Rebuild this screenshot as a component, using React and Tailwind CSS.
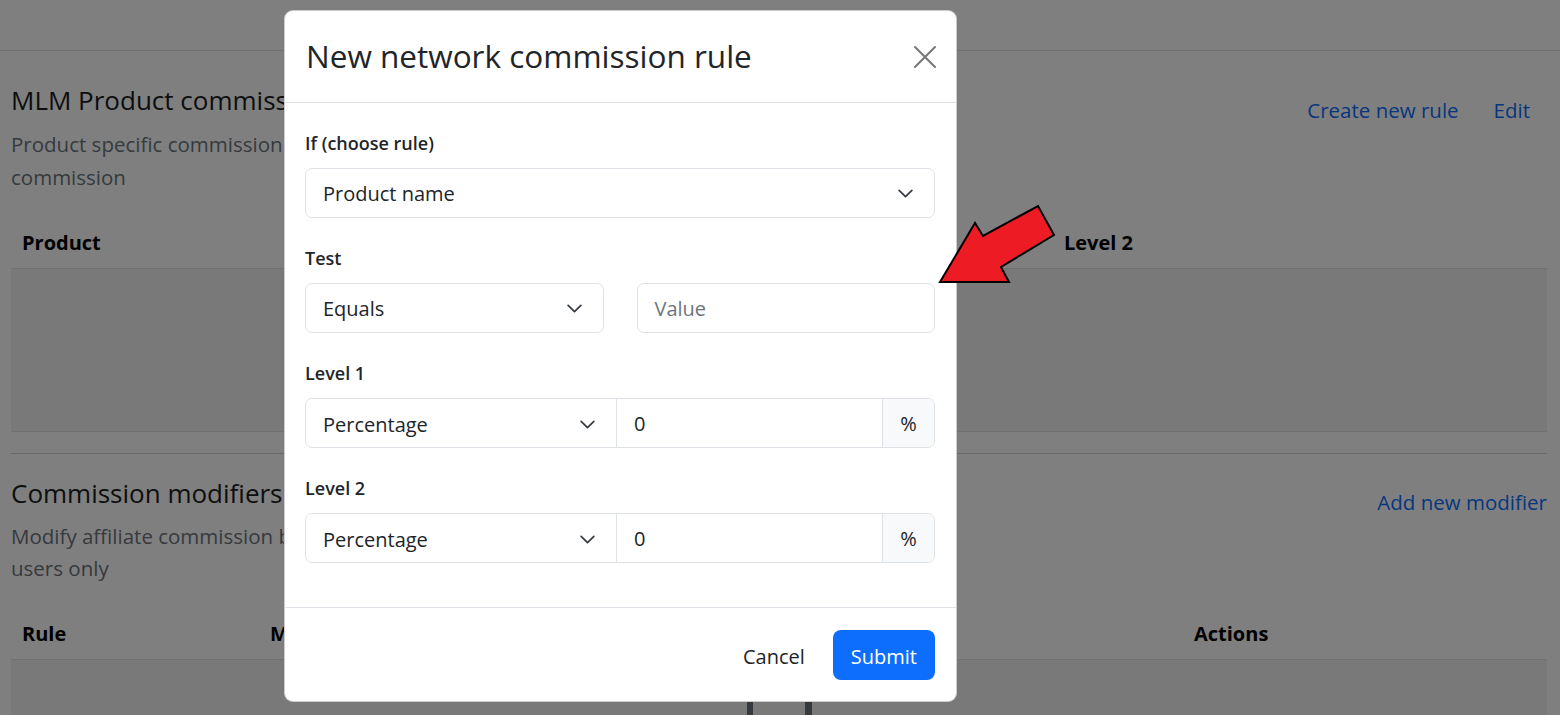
import React from "react";

function Chevron() {
  return (
    <svg width="17" height="17" viewBox="0 0 16 16" fill="none" className="shrink-0">
      <path d="M2 5l6 6 6-6" stroke="#343a40" strokeWidth="1.6" strokeLinecap="round" strokeLinejoin="round" />
    </svg>
  );
}

function SelectBox({ label, className = "" }) {
  return (
    <div className={"h-[50px] flex items-center justify-between pl-[17px] pr-[20px] text-[20px] text-[#212529] " + className}>
      <span className="pt-[2px]">{label}</span>
      <Chevron />
    </div>
  );
}

function Label({ children }) {
  return <div className="h-[32px] leading-[32px] mb-[9px] text-[18px] font-semibold text-[#212529]">{children}</div>;
}

function LevelGroup({ label }) {
  return (
    <div className="mb-[24px]">
      <Label>{label}</Label>
      <div className="flex h-[50px] border border-[#dee2e6] rounded-[7px] overflow-hidden">
        <SelectBox label="Percentage" className="w-[311px] h-[48px] border-r border-[#dee2e6]" />
        <div className="flex-1 flex items-center pl-[17px] pt-[2px] text-[20px] text-[#212529]">0</div>
        <div className="w-[52px] flex items-center justify-center pt-[2px] border-l border-[#dee2e6] bg-[#f8f9fa] text-[20px] text-[#212529]">%</div>
      </div>
    </div>
  );
}

export default function App() {
  return (
    <div className="relative w-[1560px] h-[715px] overflow-hidden bg-white font-['Open_Sans',sans-serif]">
      {/* Background page */}
      <div className="h-[51px] border-b border-[#dee2e6]"></div>
      <div className="ml-[11px] w-[1536px]">
        {/* Section 1 */}
        <div className="mt-[32px] flex justify-between items-start">
          <div>
            <div className="h-[34px] leading-[34px] text-[26px] font-medium text-[#1a1d20]">MLM Product commission rules</div>
            <div className="mt-[11px] text-[20.5px] leading-[33px] text-[#6c757d]">
              <div className="whitespace-nowrap">Product specific commission rules override the default</div>
              <div className="whitespace-nowrap">commission</div>
            </div>
          </div>
          <div className="mt-[12px] flex gap-[35px] pr-[17px] text-[20.5px] leading-[30px] text-[#0d6efd]">
            <span>Create new rule</span>
            <span>Edit</span>
          </div>
        </div>
        <div className="mt-[26px]">
          <div className="flex border-b border-[#dee2e6] text-[20px] font-bold text-black leading-[26px]">
            <div className="w-[520px] pl-[11px] pt-[10px] pb-[12px]">Product</div>
            <div className="w-[522px] pl-[11px] pt-[10px] pb-[12px]">Level 1</div>
            <div className="flex-1 pl-[11px] pt-[10px] pb-[12px]">Level 2</div>
          </div>
          <div className="h-[163px] bg-[#f3f3f3] border-b border-[#dee2e6]"></div>
        </div>
        <div className="mt-[21px] border-t border-[#cfd2d5]"></div>

        {/* Section 2 */}
        <div className="mt-[22px] flex justify-between items-start">
          <div>
            <div className="h-[34px] leading-[34px] text-[26px] font-medium text-[#1a1d20]">Commission modifiers</div>
            <div className="mt-[10px] text-[20.5px] leading-[32px] text-[#6c757d]">
              <div className="whitespace-nowrap">Modify affiliate commission based on rules for</div>
              <div className="whitespace-nowrap">users only</div>
            </div>
          </div>
          <div className="mt-[11px] text-[20.5px] leading-[30px] text-[#0d6efd]">
            <span>Add new modifier</span>
          </div>
        </div>
        <div className="mt-[27px]">
          <div className="flex border-b border-[#dee2e6] text-[20px] font-bold text-black leading-[26px]">
            <div className="w-[248px] pl-[11px] pt-[10px] pb-[12px]">Rule</div>
            <div className="w-[924px] pl-[11px] pt-[10px] pb-[12px]">Modifier</div>
            <div className="flex-1 pl-[11px] pt-[10px] pb-[12px]">Actions</div>
          </div>
          <div className="h-[120px] bg-[#f3f3f3] pt-[30px] pl-[736px] flex gap-[52px]">
            <div className="w-[6px] h-[40px] bg-[#6c757d]"></div>
            <div className="w-[7px] h-[40px] bg-[#6c757d]"></div>
          </div>
        </div>
      </div>

      {/* Backdrop */}
      <div className="absolute inset-0 bg-black/50"></div>

      {/* Modal */}
      <div className="absolute left-[284px] top-[10px] w-[673px] bg-white rounded-[9px] border border-black/20 overflow-hidden">
        <div className="h-[92px] flex items-center justify-between pl-[21px] pr-[19px] border-b border-[#dee2e6]">
          <div className="text-[31.5px] font-medium text-[#212529] leading-[40px] -mt-[1px]">New network commission rule</div>
          <svg width="24" height="24" viewBox="0 0 24 24" fill="none">
            <path d="M2 2L22 22M22 2L2 22" stroke="#777777" strokeWidth="2" strokeLinecap="round" />
          </svg>
        </div>
        <div className="pl-[20px] pr-[21px] pt-[24px] pb-[20px]">
          <div className="mb-[24px]">
            <Label>If (choose rule)</Label>
            <SelectBox label="Product name" className="border border-[#dee2e6] rounded-[7px]" />
          </div>
          <div className="mb-[24px]">
            <Label>Test</Label>
            <div className="grid grid-cols-2 gap-[33px]">
              <SelectBox label="Equals" className="border border-[#dee2e6] rounded-[7px]" />
              <div className="h-[50px] flex items-center pl-[17px] pt-[2px] border border-[#dee2e6] rounded-[7px] text-[20px] text-[#6c757d]">Value</div>
            </div>
          </div>
          <LevelGroup label="Level 1" />
          <LevelGroup label="Level 2" />
        </div>
        <div className="border-t border-[#dee2e6] pt-[22px] pb-[21px] pr-[21px] flex justify-end items-center gap-[10px]">
          <div className="h-[50px] px-[18px] pt-[3px] flex items-center text-[20px] text-[#212529]">Cancel</div>
          <div className="h-[50px] px-[18px] pt-[3px] flex items-center rounded-[8px] bg-[#0d6efd] text-[20px] text-white">Submit</div>
        </div>
      </div>

      {/* Annotation arrow */}
      <svg className="absolute inset-0 pointer-events-none" width="1560" height="715" viewBox="0 0 1560 715">
        <polygon
          points="940,282 975,223 983,236 1038,206 1054,235 1001,267 1009,282"
          fill="#ed1c24"
          stroke="#000"
          strokeWidth="2"
          strokeLinejoin="miter"
        />
      </svg>
    </div>
  );
}
